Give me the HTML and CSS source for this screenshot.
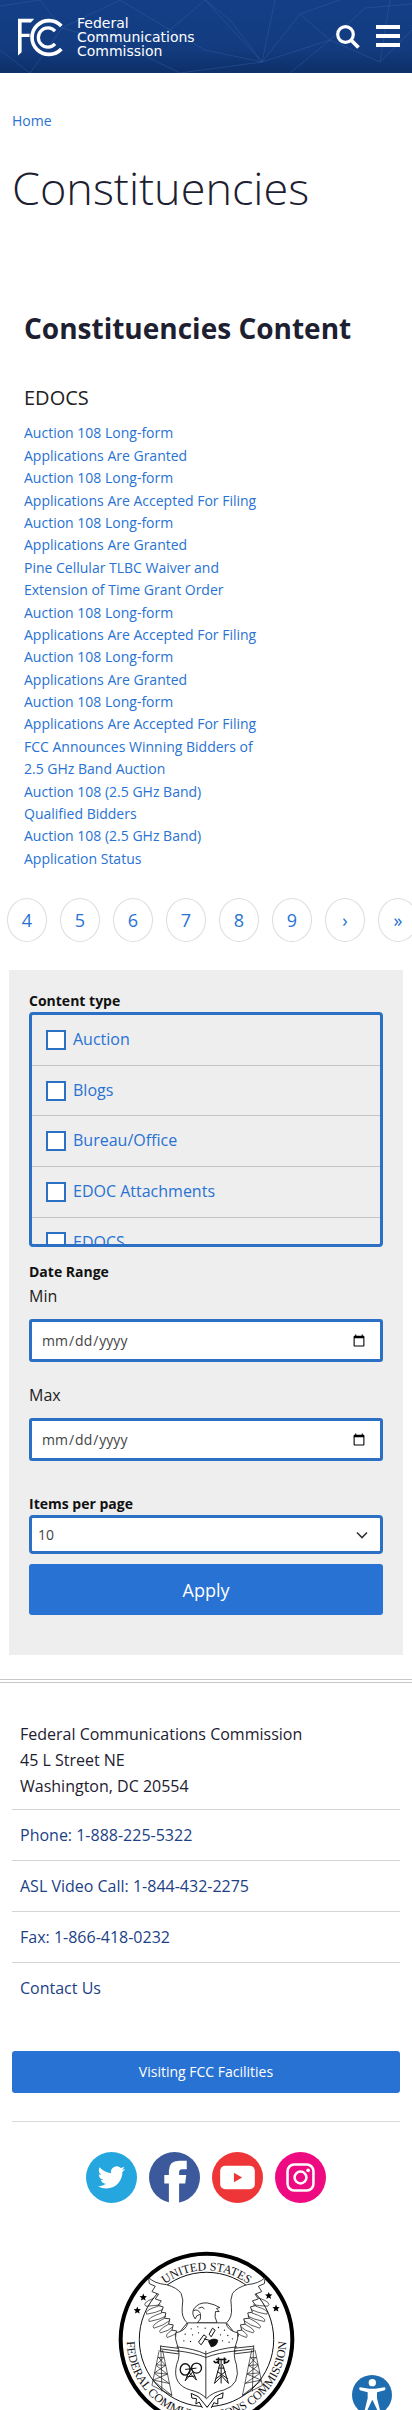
FILE: index.html
```html
<!DOCTYPE html>
<html lang="en">
<head>
<meta charset="utf-8">
<meta name="viewport" content="width=device-width, initial-scale=1">
<title>Constituencies | Federal Communications Commission</title>
<link rel="stylesheet" href="styles.css">
</head>
<body>
<header class="site-header">
  <svg class="header-pattern" viewBox="0 0 412 73" preserveAspectRatio="xMidYMid slice" aria-hidden="true">
    <path d="M0 6L40 0 62 28 30 73M62 28L120 0 170 30 205 0 262 62 300 14 340 0M262 62L230 20 205 0M262 62L180 73 120 44 62 28M262 62L275 0M262 62L330 40 380 62 412 30M300 14L330 40 365 8 412 4M380 62L390 0M170 30L205 50 262 62M120 44L170 30M330 40L290 73M0 50L30 73"/>
  </svg>
  <a class="brand" href="#" aria-label="Federal Communications Commission">
    <svg class="brand-mark" viewBox="50 50 142 120" aria-hidden="true">
      <path d="M53 55H102L92 66H64V100H88V110H64V156L53 166Z" fill="#fff"/>
      <path d="M184 77A51 51 0 1 0 184 146" fill="none" stroke="#fff" stroke-width="11"/>
      <path d="M165 92A29 29 0 1 0 165 131" fill="none" stroke="#fff" stroke-width="10"/>
    </svg>
    <span class="brand-name">Federal<br>Communications<br>Commission</span>
  </a>
  <div class="header-tools">
    <button class="icon-button" type="button" aria-label="Search">
      <svg width="24" height="24" viewBox="0 0 24 24"><circle cx="9.500" cy="9.500" r="7.800" fill="none" stroke="#fff" stroke-width="3.200"/><path d="M15 15L22.500 22.500" stroke="#fff" stroke-width="3.800"/></svg>
    </button>
    <button class="icon-button" type="button" aria-label="Menu">
      <svg width="24" height="24" viewBox="0 0 24 24"><path d="M0 2H24M0 11H24M0 20H24" stroke="#fff" stroke-width="4"/></svg>
    </button>
  </div>
</header>

<main>
  <nav class="breadcrumb" aria-label="Breadcrumb"><a href="#">Home</a></nav>
  <h1 class="page-title">Constituencies</h1>

  <section class="content">
    <h2 class="content-title">Constituencies Content</h2>
    <h3 class="content-group">EDOCS</h3>
    <ul class="doc-list">
      <li><a href="#">Auction 108 Long-form<br>Applications Are Granted</a></li>
      <li><a href="#">Auction 108 Long-form<br>Applications Are Accepted For Filing</a></li>
      <li><a href="#">Auction 108 Long-form<br>Applications Are Granted</a></li>
      <li><a href="#">Pine Cellular TLBC Waiver and<br>Extension of Time Grant Order</a></li>
      <li><a href="#">Auction 108 Long-form<br>Applications Are Accepted For Filing</a></li>
      <li><a href="#">Auction 108 Long-form<br>Applications Are Granted</a></li>
      <li><a href="#">Auction 108 Long-form<br>Applications Are Accepted For Filing</a></li>
      <li><a href="#">FCC Announces Winning Bidders of<br>2.5 GHz Band Auction</a></li>
      <li><a href="#">Auction 108 (2.5 GHz Band)<br>Qualified Bidders</a></li>
      <li><a href="#">Auction 108 (2.5 GHz Band)<br>Application Status</a></li>
    </ul>
  </section>

  <nav class="pager" aria-label="Pagination">
    <a href="#">4</a><a href="#">5</a><a href="#">6</a><a href="#">7</a><a href="#">8</a><a href="#">9</a><a href="#" aria-label="Next page">›</a><a href="#" aria-label="Last page">»</a>
  </nav>

  <form class="filters">
    <fieldset class="field">
      <legend class="field-title">Content type</legend>
      <div class="check-list">
        <label class="check"><input type="checkbox">Auction</label>
        <label class="check"><input type="checkbox">Blogs</label>
        <label class="check"><input type="checkbox">Bureau/Office</label>
        <label class="check"><input type="checkbox">EDOC Attachments</label>
        <label class="check"><input type="checkbox">EDOCS</label>
      </div>
    </fieldset>
    <fieldset class="field dates">
      <legend class="field-title">Date Range</legend>
      <label class="date-label" for="min">Min</label>
      <input class="date-input" id="min" type="date">
      <label class="date-label" for="max">Max</label>
      <input class="date-input" id="max" type="date">
    </fieldset>
    <label class="field-title" for="items">Items per page</label>
    <div class="select">
      <select id="items"><option>10</option><option>25</option><option>50</option></select>
      <svg width="12" height="8" viewBox="0 0 12 8" aria-hidden="true"><path d="M1 1.500L6 6.500L11 1.500" fill="none" stroke="#333" stroke-width="1.600"/></svg>
    </div>
    <button class="apply" type="submit">Apply</button>
  </form>
</main>

<footer class="site-footer">
  <address class="address">Federal Communications Commission<br>45 L Street NE<br>Washington, DC 20554</address>
  <ul class="contacts">
    <li><a href="#">Phone: 1-888-225-5322</a></li>
    <li><a href="#">ASL Video Call: 1-844-432-2275</a></li>
    <li><a href="#">Fax: 1-866-418-0232</a></li>
    <li><a href="#">Contact Us</a></li>
  </ul>
  <a class="visit" href="#">Visiting FCC Facilities</a>
  <div class="social">
    <a href="#" aria-label="Twitter"><svg viewBox="0 0 50 50"><circle cx="25" cy="25" r="25" fill="#26a6de"/><path transform="translate(11.500 11.500) scale(1.120)" fill="#fff" d="M23.953 4.570a10 10 0 01-2.825.775 4.958 4.958 0 002.163-2.723c-.951.555-2.005.959-3.127 1.184a4.920 4.920 0 00-8.384 4.482C7.690 8.095 4.067 6.130 1.640 3.162a4.822 4.822 0 00-.666 2.475c0 1.710.870 3.213 2.188 4.096a4.904 4.904 0 01-2.228-.616v.060a4.923 4.923 0 003.946 4.827 4.996 4.996 0 01-2.212.085 4.936 4.936 0 004.604 3.417 9.867 9.867 0 01-6.102 2.105c-.390 0-.779-.023-1.170-.067a13.995 13.995 0 007.557 2.209c9.053 0 13.998-7.496 13.998-13.985 0-.210 0-.420-.015-.630A9.935 9.935 0 0024 4.590z"/></svg></a>
    <a href="#" aria-label="Facebook"><svg viewBox="0 0 50 50"><circle cx="25" cy="25" r="25" fill="#3c5a9b"/><path fill="#fff" d="M19.500 50V31H15V22.500H19.500V18.500Q19.500 8.500 29.500 8.500H37V17H32.500Q29.500 17 29.500 20V22.500H36.500L35.500 31H29.500V50Z"/></svg></a>
    <a href="#" aria-label="YouTube"><svg viewBox="0 0 50 50"><circle cx="25" cy="25" r="25" fill="#ee3537"/><rect x="8" y="13.500" width="34" height="23" rx="5" fill="#fff"/><path d="M21.500 20.300V29.700L29.500 25Z" fill="#ee3537"/></svg></a>
    <a href="#" aria-label="Instagram"><svg viewBox="0 0 50 50"><circle cx="25" cy="25" r="25" fill="#ee0a80"/><g fill="none" stroke="#fff" stroke-width="2.500"><rect x="12.300" y="12.300" width="25.400" height="25.400" rx="6.500"/><circle cx="25" cy="25" r="5.800"/></g><circle cx="32.500" cy="18" r="1.800" fill="#fff"/></svg></a>
  </div>
  <svg class="seal" viewBox="50 52 532 532" role="img" aria-label="Federal Communications Commission seal">
    <defs>
      <path id="arc-top" d="M108 318A208 208 0 0 1 524 318"/>
      <path id="arc-bottom" d="M138 156A240 240 0 1 0 494 156"/>
    </defs>
    <circle cx="316" cy="318" r="258" fill="#fff" stroke="#000" stroke-width="12"/>
    <circle cx="316" cy="318" r="202" fill="none" stroke="#111" stroke-width="3"/>
    <g class="seal-text">
      <text font-size="36" text-anchor="middle"><textPath href="#arc-top" startOffset="50%">UNITED STATES</textPath></text>
      <text font-size="36" text-anchor="middle"><textPath href="#arc-bottom" startOffset="50%">FEDERAL COMMUNICATIONS COMMISSION</textPath></text>
    </g>
    <g fill="#000">
      <path id="star" d="M126 180l3 7 8 1-6 5 2 8-7-4-7 4 2-8-6-5 8-1z"/>
      <use href="#star" x="-18" y="39"/><use href="#star" x="377" y="-5"/><use href="#star" x="399" y="33"/>
    </g>
    <g fill="none" stroke="#111" stroke-width="2.500" stroke-linejoin="round">
      <g id="wing">
        <path fill="#fff" d="M142 132Q160 150 195 153Q228 162 240 180Q248 198 243 222Q240 252 258 268L232 300 222 308 226 292 212 290 216 274 202 272 206 256 190 254 194 238 180 236 186 220 170 216 180 202 162 196 172 182 152 174 162 158 144 150Z"/>
        <path stroke-width="2" d="M158 194Q120 208 134 218Q160 216 178 214M170 218Q128 230 136 242Q164 238 184 228M182 238Q134 254 144 264Q176 258 194 248M190 254Q146 276 158 284Q188 276 204 262M202 272Q166 292 178 298Q204 292 214 280M212 290Q190 304 198 312Q216 306 224 300"/>
      </g>
      <use href="#wing" transform="translate(634 0) scale(-1 1)"/>
      <path fill="#fff" d="M288 268Q302 258 298 242Q284 244 282 256Q270 240 278 226Q292 206 318 208Q340 212 356 222L346 225 354 234 343 234Q338 250 348 268Z"/>
      <path d="M292 224Q304 216 310 226M276 232Q290 224 298 240"/>
      <path d="M178 338Q250 346 312 356Q390 344 458 338M178 346Q250 356 312 364Q390 354 458 346M178 354L312 372 458 354M178 336V354M458 336V354"/>
      <g id="tower" stroke-width="2">
        <path d="M174 350L152 456M184 350L212 486M179 350L182 474M170 372H188M165 394L193 396M160 418L198 422M156 440L204 450M152 456L212 486M172 372L193 396M188 372L165 394M165 396L198 422M193 396L160 418M160 420L204 450M198 422L156 440M156 442L212 486"/>
      </g>
      <use href="#tower" transform="translate(636 0) scale(-1 1)"/>
      <path fill="#fff" d="M260 268H374Q380 292 410 298Q412 316 404 334Q394 362 406 394Q420 454 368 470Q334 476 316 496Q298 476 268 470Q212 454 226 394Q240 362 228 334Q220 316 224 298Q254 292 260 268Z"/>
      <path d="M226 340Q280 346 314 362Q350 346 408 340M228 352Q280 358 314 372Q350 358 406 352M314 352V494"/>
      <path stroke-width="3" d="M292 326L308 304 316 310 300 334ZM324 302L334 284 342 290 330 310ZM308 316L330 322"/>
      <path fill="#111" d="M322 324Q336 312 350 320Q348 338 330 340Z"/>
      <ellipse cx="252" cy="408" rx="15" ry="17" stroke-width="4"/><circle cx="286" cy="404" r="15" stroke-width="4"/>
      <path stroke-width="3" d="M268 404L252 442M270 404L286 440M256 430L282 428M262 416L286 440M274 416L252 442M252 408L286 404"/>
      <path stroke-width="3" d="M360 376V450M356 392L340 450M364 392L382 450M348 414L380 436M374 414L344 436M340 450L362 428 382 450M352 404H370"/>
      <path stroke-width="5" d="M338 382Q342 392 352 384M368 384Q378 392 384 380M344 378H376M352 372V392M370 372V392"/>
      <path stroke-width="3" fill="#fff" d="M304 524L294 506 284 512 286 496 272 494 270 480 292 490 318 522 342 490 366 478 364 494 350 496 350 512 338 508 330 524"/>
    </g>
    <g fill="#111"><circle cx="270" cy="286" r="2"/><circle cx="290" cy="280" r="2"/><circle cx="312" cy="284" r="2"/><circle cx="352" cy="282" r="2"/><circle cx="370" cy="290" r="2"/><circle cx="252" cy="302" r="2"/><circle cx="274" cy="304" r="2"/><circle cx="292" cy="298" r="2"/><circle cx="358" cy="304" r="2"/><circle cx="380" cy="306" r="2"/><circle cx="394" cy="316" r="2"/><circle cx="248" cy="322" r="2"/><circle cx="268" cy="324" r="2"/><circle cx="364" cy="322" r="2"/><circle cx="384" cy="326" r="2"/></g>
  </svg>
</footer>

<button class="access" type="button" aria-label="Accessibility options">
  <svg viewBox="0 0 120 120"><circle cx="60" cy="60" r="60" fill="#1d6db0"/><g fill="#fff"><circle cx="61" cy="23" r="11"/><path d="M24 37L52 41H70L98 37Q103 40 98 46L75 52V70L84 106Q80 112 76 106L62 76H60L46 106Q42 112 38 106L47 70V52L24 46Q19 40 24 37Z"/></g></svg>
</button>
</body>
</html>
```
FILE: styles.css
```css
* { box-sizing: border-box; }

html, body { height: 100%; }

body {
  margin: 0;
  overflow: hidden;
  background: #fff;
  color: #1d2030;
  font-family: "Open Sans", "Noto Sans", sans-serif;
  font-size: 16px;
  line-height: 1.6;
}

a { color: #2872d3; text-decoration: none; }
ul { list-style: none; margin: 0; padding: 0; }
svg { display: block; }

.site-header {
  display: grid;
  grid-template-columns: 1fr auto;
  align-items: center;
  height: 73px;
  padding: 0 12px 0 17px;
  background: linear-gradient(#143f87 0%, #133c80 65%, #0e2f68 100%);
}
.header-pattern {
  grid-area: 1 / 1 / 2 / 3;
  justify-self: stretch;
  height: 73px;
  margin: 0 -12px 0 -17px;
  fill: none;
  stroke: #3b69b0;
  stroke-opacity: 0.35;
}
.brand {
  grid-area: 1 / 1;
  display: flex;
  align-items: center;
  gap: 13px;
  color: #fff;
}
.brand-mark { width: 47px; height: 40px; }
.brand-name {
  font-family: "DejaVu Sans", sans-serif;
  font-size: 14px;
  line-height: 14px;
}
.header-tools { grid-area: 1 / 2; display: flex; gap: 16px; }
.icon-button { padding: 0; border: 0; background: none; cursor: pointer; }

.breadcrumb { padding: 37px 12px 0; font-size: 14px; }
.page-title {
  margin: 20px 12px 0;
  color: #1d2030;
  font-size: 45px;
  font-weight: 300;
  line-height: 72px;
}

.content { padding: 82px 24px 0; }
.content-title { margin: 0; font-size: 28px; line-height: 44px; }
.content-group {
  margin: 32px 0 0;
  color: #222;
  font-size: 20px;
  font-weight: 400;
  line-height: 32px;
}
.doc-list { margin-top: 8px; font-size: 14px; }

.pager {
  display: flex;
  gap: 13px;
  margin-top: 28px;
  padding-left: 7px;
  overflow: hidden;
}
.pager a {
  flex: none;
  width: 40px;
  height: 44px;
  border: 1px solid #ddd;
  border-radius: 50%;
  font-size: 18px;
  line-height: 42px;
  text-align: center;
}

.filters {
  margin: 28px 9px 0;
  padding: 20px 20px 40px;
  background: #eee;
}
.field { min-width: 0; margin: 0; padding: 0; border: 0; }
.field-title {
  display: block;
  padding: 0;
  color: #111;
  font-size: 14px;
  font-weight: 700;
  line-height: 22px;
}
.check-list {
  height: 235px;
  border: 3px solid #2b70c4;
  border-radius: 4px;
  overflow: hidden;
}
.check {
  display: flex;
  align-items: center;
  gap: 7px;
  padding: 12px 14px;
  border-bottom: 1px solid #c4c4c4;
  color: #2872d3;
}
.check input {
  appearance: none;
  width: 20px;
  height: 20px;
  margin: 0;
  border: 2px solid #2b70c4;
  background: #fff;
}

.dates { margin: 14px 0 12px; }
.date-label { display: block; color: #222; line-height: 26px; }
.date-input {
  display: block;
  width: 100%;
  height: 43px;
  margin: 10px 0 20px;
  padding: 0 12px 0 9px;
  border: 3px solid #2b70c4;
  border-radius: 3px;
  background: #fff;
  color: #444;
  font: 14px "Open Sans", "Noto Sans", sans-serif;
}
.select { display: grid; align-items: center; }
.select select {
  grid-area: 1 / 1;
  appearance: none;
  height: 39px;
  padding: 0 30px 0 6px;
  border: 3px solid #2b70c4;
  border-radius: 4px;
  background: #fff;
  color: #444;
  font: 14px "Open Sans", "Noto Sans", sans-serif;
}
.select svg { grid-area: 1 / 1; justify-self: end; margin-right: 15px; pointer-events: none; }
.apply {
  display: block;
  width: 100%;
  height: 51px;
  margin-top: 10px;
  border: 0;
  border-radius: 3px;
  background: #2872d3;
  color: #fff;
  font: 18px "Open Sans", "Noto Sans", sans-serif;
}

.site-footer {
  margin-top: 24px;
  padding: 38px 12px 24px;
  border-top: 4px double #c8c8c8;
}
.address { padding: 0 8px 10px; font-style: normal; line-height: 26px; }
.contacts a {
  display: block;
  padding: 12px 8px;
  border-top: 1px solid #d4d4d8;
  color: #1c3f86;
  line-height: 26px;
}
.visit {
  display: block;
  margin-top: 38px;
  border-radius: 3px;
  background: #2872d3;
  color: #fff;
  font-size: 14px;
  line-height: 42px;
  text-align: center;
}
.social {
  display: flex;
  justify-content: center;
  gap: 12px;
  margin-top: 28px;
  padding-top: 30px;
  border-top: 1px solid #d9d9d9;
}
.social svg { width: 51px; height: 51px; }
.seal { width: 177px; height: 177px; margin: 48px auto 0; }
.seal-text { font-family: "Liberation Serif", serif; fill: #111; }

.access {
  position: fixed;
  right: 20px;
  bottom: -5px;
  width: 40px;
  height: 40px;
  padding: 0;
  border: 0;
  border-radius: 50%;
  background: none;
}
```
